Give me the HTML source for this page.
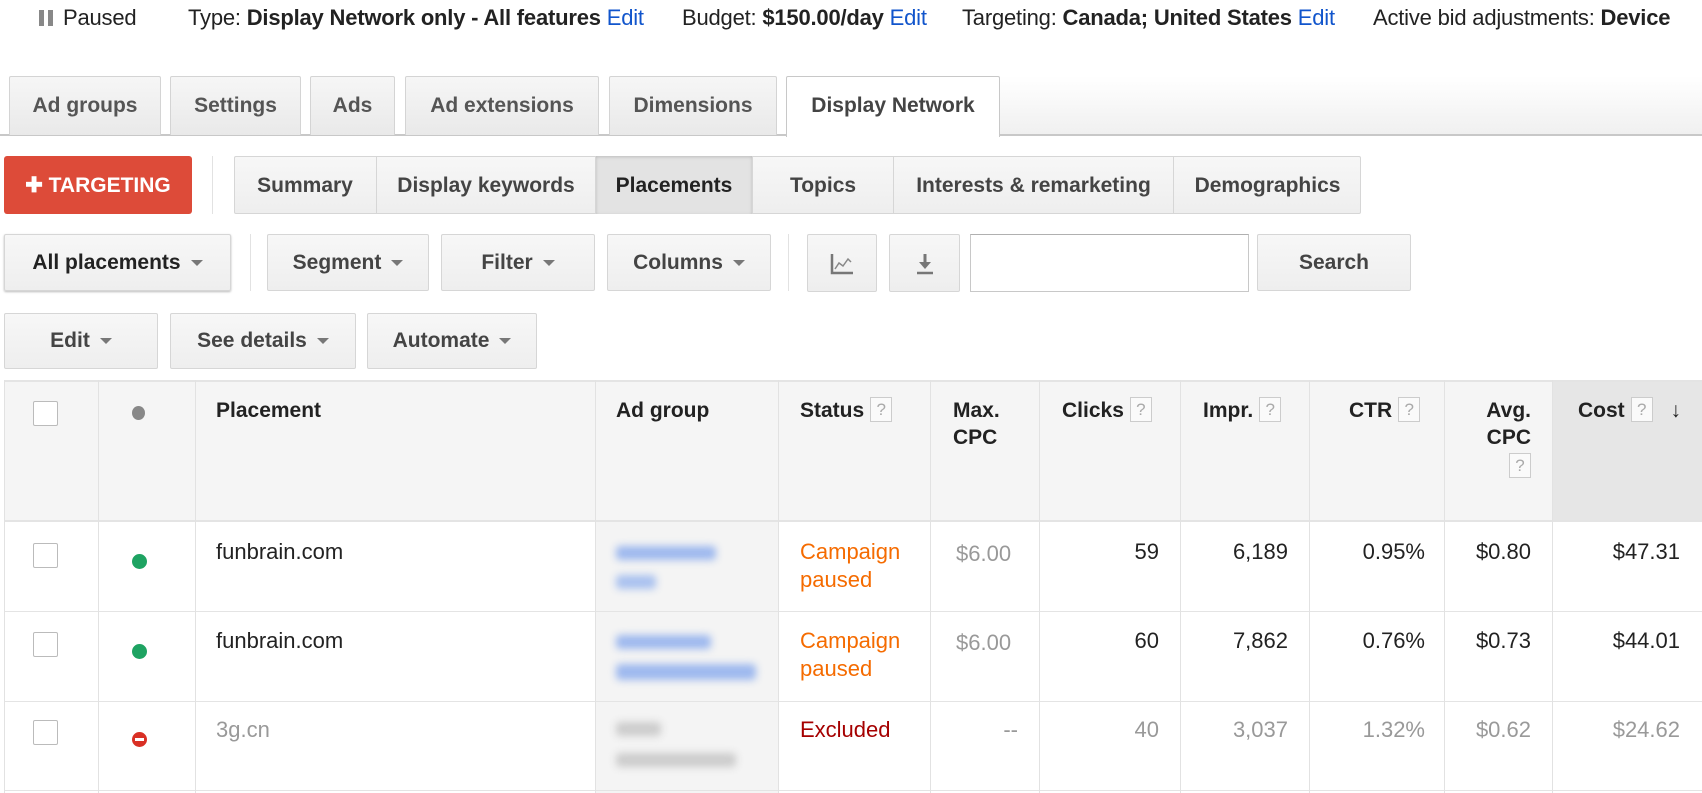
<!DOCTYPE html>
<html><head><meta charset="utf-8"><style>
*{box-sizing:border-box;margin:0;padding:0}
body{width:1702px;height:793px;overflow:hidden;background:#fff;font-family:"Liberation Sans",Arial,sans-serif;color:#222;position:relative}
.a{position:absolute}
.top{top:5px;left:0;font-size:22px;white-space:nowrap;color:#222;letter-spacing:-0.2px}
.top b{font-weight:bold}.top .e{color:#1155cc}
.tab{position:absolute;top:76px;height:59px;border:1px solid #d4d4d4;border-bottom:none;background:linear-gradient(#f6f6f6,#e9e9e9);font-weight:bold;font-size:21px;color:#555;text-align:center;line-height:58px;border-radius:2px 2px 0 0}
.btn{position:absolute;border:1px solid #d6d6d6;background:linear-gradient(#f7f7f7,#eeeeee);font-weight:bold;font-size:21px;color:#444;text-align:center;border-radius:2px}
.seg{position:absolute;top:156px;height:58px;border-right:1px solid #d6d6d6;font-weight:bold;font-size:21px;color:#444;text-align:center;line-height:60px}
.car{display:inline-block;width:0;height:0;border-left:6px solid transparent;border-right:6px solid transparent;border-top:6px solid #777;vertical-align:middle;margin-left:10px}
.vl{position:absolute;background:#e2e2e2;width:1px}
.hl{position:absolute;left:4px;width:1698px;height:2px;background:#e4e4e4}
.th{position:absolute;top:397px;font-weight:bold;font-size:21px;color:#222;line-height:27px}
.q{display:inline-block;width:22px;height:25px;border:1px solid #ccc;background:#fafafa;color:#aaa;font-size:17px;line-height:23px;text-align:center;font-weight:normal;vertical-align:top;margin-left:6px}
.td{position:absolute;font-size:22px;line-height:28px}
.r{text-align:right}
.cb{position:absolute;left:33px;width:25px;height:25px;border:1px solid #bbb;background:#fff;border-radius:2px}
.dot{position:absolute;left:132px;width:15px;height:15px;border-radius:50%}
.blur{position:absolute;filter:blur(4px);border-radius:4px}
</style></head><body>
<div class="a top" style="left:39px"><span style="display:inline-block;height:16px;border-left:5px solid #888;border-right:5px solid #888;width:14px;margin-right:10px;vertical-align:-1px"></span>Paused</div>
<div class="a top" style="left:188px">Type: <b>Display Network only - All features</b> <span class="e">Edit</span></div>
<div class="a top" style="left:682px">Budget: <b>$150.00/day</b> <span class="e">Edit</span></div>
<div class="a top" style="left:962px">Targeting: <b>Canada; United States</b> <span class="e">Edit</span></div>
<div class="a top" style="left:1373px">Active bid adjustments: <b>Device</b></div>

<div class="a" style="left:0;top:134px;width:1702px;height:2px;background:#c8c8c8"></div>
<div class="a" style="left:1000px;top:76px;width:702px;height:58px;background:linear-gradient(#fff,#f0f0f0)"></div>
<div class="tab" style="left:9px;width:152px">Ad groups</div>
<div class="tab" style="left:170px;width:131px">Settings</div>
<div class="tab" style="left:310px;width:85px">Ads</div>
<div class="tab" style="left:405px;width:194px">Ad extensions</div>
<div class="tab" style="left:609px;width:168px">Dimensions</div>
<div class="tab" style="left:786px;width:214px;height:61px;background:#fff;color:#444;border-color:#c8c8c8">Display Network</div>

<div class="a" style="left:4px;top:156px;width:188px;height:58px;background:#dd4b39;border-radius:3px;color:#fff;font-weight:bold;font-size:21px;line-height:60px;text-align:center">✚ TARGETING</div>
<div class="vl" style="left:212px;top:156px;height:58px"></div>
<div class="a" style="left:234px;top:156px;width:1127px;height:58px;border:1px solid #d6d6d6;background:linear-gradient(#f7f7f7,#eeeeee);border-radius:2px"></div>
<div class="seg" style="left:234px;width:143px">Summary</div>
<div class="seg" style="left:377px;width:219px">Display keywords</div>
<div class="seg" style="left:596px;width:157px;background:#e3e3e3;color:#222;box-shadow:inset 0 1px 3px #bbb">Placements</div>
<div class="seg" style="left:753px;width:141px">Topics</div>
<div class="seg" style="left:894px;width:280px">Interests &amp; remarketing</div>
<div class="seg" style="left:1174px;width:187px;border-right:none">Demographics</div>

<div class="btn" style="left:4px;top:234px;width:227px;height:57px;line-height:55px;color:#222;box-shadow:0 1px 2px #bbb">All placements<span class="car"></span></div>
<div class="vl" style="left:250px;top:234px;height:57px"></div>
<div class="btn" style="left:267px;top:234px;width:162px;height:57px;line-height:55px">Segment<span class="car"></span></div>
<div class="btn" style="left:441px;top:234px;width:154px;height:57px;line-height:55px">Filter<span class="car"></span></div>
<div class="btn" style="left:607px;top:234px;width:164px;height:57px;line-height:55px">Columns<span class="car"></span></div>
<div class="vl" style="left:788px;top:234px;height:57px"></div>
<div class="btn" style="left:807px;top:234px;width:70px;height:58px"><svg width="26" height="24" viewBox="0 0 26 24" style="margin-top:17px"><path d="M3 2V21H24" stroke="#777" stroke-width="2.5" fill="none"/><path d="M6 17L10 11L14 14L19 7L22 10" stroke="#888" stroke-width="1.5" fill="none"/></svg></div>
<div class="btn" style="left:889px;top:234px;width:71px;height:58px"><svg width="22" height="24" viewBox="0 0 22 24" style="margin-top:17px"><path d="M11 2V15" stroke="#777" stroke-width="3"/><path d="M5 10L11 17L17 10Z" fill="#777"/><path d="M3 21H19" stroke="#777" stroke-width="2.5"/></svg></div>
<div class="a" style="left:970px;top:234px;width:279px;height:58px;border:1px solid #c8c8c8;border-top-color:#b0b0b0;background:#fff"></div>
<div class="btn" style="left:1257px;top:234px;width:154px;height:57px;line-height:55px">Search</div>

<div class="btn" style="left:4px;top:313px;width:154px;height:56px;line-height:54px">Edit<span class="car"></span></div>
<div class="btn" style="left:170px;top:313px;width:186px;height:56px;line-height:54px">See details<span class="car"></span></div>
<div class="btn" style="left:367px;top:313px;width:170px;height:56px;line-height:54px">Automate<span class="car"></span></div>

<div class="a" style="left:4px;top:380px;width:1698px;height:141px;background:#f5f5f5"></div>
<div class="a" style="left:1552px;top:380px;width:150px;height:141px;background:#e6e6e6"></div>
<div class="a" style="left:595px;top:521px;width:183px;height:272px;background:#f4f4f4"></div>
<div class="hl" style="top:380px"></div>
<div class="hl" style="top:520px"></div>
<div class="hl" style="top:611px;height:1px"></div>
<div class="hl" style="top:701px;height:1px"></div>
<div class="hl" style="top:790px;height:1px"></div>
<div class="vl" style="left:4px;top:380px;height:413px"></div>
<div class="vl" style="left:98px;top:380px;height:413px"></div>
<div class="vl" style="left:195px;top:380px;height:413px"></div>
<div class="vl" style="left:595px;top:380px;height:413px"></div>
<div class="vl" style="left:778px;top:380px;height:413px"></div>
<div class="vl" style="left:930px;top:380px;height:413px"></div>
<div class="vl" style="left:1039px;top:380px;height:413px"></div>
<div class="vl" style="left:1180px;top:380px;height:413px"></div>
<div class="vl" style="left:1309px;top:380px;height:413px"></div>
<div class="vl" style="left:1444px;top:380px;height:413px"></div>
<div class="vl" style="left:1552px;top:380px;height:413px"></div>

<div class="cb" style="top:401px"></div>
<div class="dot" style="top:406px;width:13px;height:14px;background:#888;left:132px"></div>
<div class="th" style="left:216px">Placement</div>
<div class="th" style="left:616px">Ad group</div>
<div class="th" style="left:800px">Status<span class="q">?</span></div>
<div class="th" style="left:953px">Max.<br>CPC</div>
<div class="th" style="left:1062px">Clicks<span class="q">?</span></div>
<div class="th" style="left:1203px">Impr.<span class="q">?</span></div>
<div class="th" style="left:1349px">CTR<span class="q">?</span></div>
<div class="th r" style="left:1444px;width:87px">Avg.<br>CPC<br><span class="q" style="margin-top:2px">?</span></div>
<div class="th" style="left:1578px">Cost<span class="q">?</span> <span style="margin-left:12px">↓</span></div>

<div class="cb" style="top:543px"></div><div class="dot" style="top:554px;background:#1ea362"></div>
<div class="td" style="left:216px;top:538px">funbrain.com</div>
<div class="blur" style="left:616px;top:546px;width:100px;height:14px;background:#9db8ee"></div>
<div class="blur" style="left:616px;top:575px;width:40px;height:14px;background:#a9c1ef"></div>
<div class="td" style="left:800px;top:538px;color:#f56b00">Campaign<br>paused</div>
<div class="td" style="left:956px;top:540px;color:#999">$6.00</div>
<div class="td r" style="left:1039px;width:120px;top:538px">59</div>
<div class="td r" style="left:1180px;width:108px;top:538px">6,189</div>
<div class="td r" style="left:1309px;width:116px;top:538px">0.95%</div>
<div class="td r" style="left:1444px;width:87px;top:538px">$0.80</div>
<div class="td r" style="left:1552px;width:128px;top:538px">$47.31</div>

<div class="cb" style="top:632px"></div><div class="dot" style="top:644px;background:#1ea362"></div>
<div class="td" style="left:216px;top:627px">funbrain.com</div>
<div class="blur" style="left:616px;top:635px;width:95px;height:14px;background:#9db8ee"></div>
<div class="blur" style="left:616px;top:664px;width:140px;height:16px;background:#9db8ee"></div>
<div class="td" style="left:800px;top:627px;color:#f56b00">Campaign<br>paused</div>
<div class="td" style="left:956px;top:629px;color:#999">$6.00</div>
<div class="td r" style="left:1039px;width:120px;top:627px">60</div>
<div class="td r" style="left:1180px;width:108px;top:627px">7,862</div>
<div class="td r" style="left:1309px;width:116px;top:627px">0.76%</div>
<div class="td r" style="left:1444px;width:87px;top:627px">$0.73</div>
<div class="td r" style="left:1552px;width:128px;top:627px">$44.01</div>

<div class="cb" style="top:720px"></div><div class="dot" style="top:732px;background:#d93025"><div style="position:absolute;left:3px;top:6px;width:9px;height:3px;background:#fff"></div></div>
<div class="td" style="left:216px;top:716px;color:#999">3g.cn</div>
<div class="blur" style="left:616px;top:722px;width:45px;height:14px;background:#ccc"></div>
<div class="blur" style="left:616px;top:753px;width:120px;height:14px;background:#ccc"></div>
<div class="td" style="left:800px;top:716px;color:#a50000">Excluded</div>
<div class="td r" style="left:930px;width:88px;top:716px;color:#999">--</div>
<div class="td r" style="left:1039px;width:120px;top:716px;color:#999">40</div>
<div class="td r" style="left:1180px;width:108px;top:716px;color:#999">3,037</div>
<div class="td r" style="left:1309px;width:116px;top:716px;color:#999">1.32%</div>
<div class="td r" style="left:1444px;width:87px;top:716px;color:#999">$0.62</div>
<div class="td r" style="left:1552px;width:128px;top:716px;color:#999">$24.62</div>
</body></html>
